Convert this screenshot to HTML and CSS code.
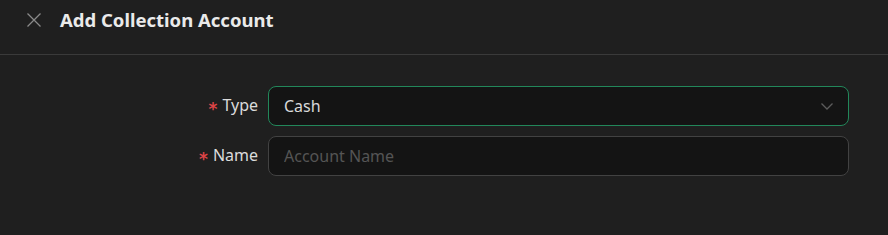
FILE: index.html
```html
<!DOCTYPE html>
<html lang="en">
<head>
    <meta charset="UTF-8">
    <meta name="viewport" content="width=device-width, initial-scale=1.0">
    <title>Add Collection Account</title>
    <link rel="stylesheet" href="styles.css">
</head>
<body>
    <div class="drawer">
        <div class="drawer-header">
            <button class="close" aria-label="Close">
                <svg width="16" height="16" viewBox="0 0 16 16" fill="none" stroke="currentColor" stroke-width="1.3">
                    <path d="M1.5 1.5 L14.5 14.5 M14.5 1.5 L1.5 14.5"/>
                </svg>
            </button>
            <div class="title">Add Collection Account</div>
        </div>

        <form class="form">
            <div class="row">
                <label class="label"><span class="req">*</span>Type</label>
                <div class="select focused">
                    <span class="value">Cash</span>
                    <svg class="arrow" width="14" height="14" viewBox="0 0 14 14" fill="none" stroke="currentColor" stroke-width="1.3">
                        <path d="M1.5 4.5 L7 10 L12.5 4.5"/>
                    </svg>
                </div>
            </div>
            <div class="row">
                <label class="label"><span class="req">*</span>Name</label>
                <input class="input" type="text" placeholder="Account Name">
            </div>
        </form>
    </div>
</body>
</html>
```

FILE: styles.css
```css
/* --- RESET & BASE -------------------------------------- */
* { box-sizing: border-box; margin: 0; padding: 0; }
html, body { height: 100%; background: #1f1f1f; font-family: "Noto Sans", "Open Sans", sans-serif; color: rgba(255,255,255,.85); }

/* --- DRAWER HEADER ------------------------------------- */
.drawer-header {
    display: flex;
    align-items: center;
    height: 55px;
    padding: 0 24px 14px 26px;
    border-bottom: 1px solid #3a3a3a;
}
.close {
    display: flex;
    width: 16px;
    height: 16px;
    margin-right: 18px;
    background: none;
    border: none;
    color: #8a8a8a;
    cursor: pointer;
}
.title {
    font-size: 18.5px;
    font-weight: 700;
    line-height: 26px;
    color: #eaeaea;
}

/* --- FORM ---------------------------------------------- */
.form {
    display: flex;
    flex-direction: column;
    gap: 10px;
    padding: 31px 39px 0 0;
}
.row {
    display: grid;
    grid-template-columns: 258px 1fr;
    column-gap: 10px;
    align-items: center;
}
.label {
    text-align: right;
    font-size: 16px;
    color: rgba(255,255,255,.85);
}
.req {
    color: #dc4446;
    margin-right: 5px;
    font-family: "DejaVu Sans", sans-serif;
    font-size: 17px;
    font-weight: 700;
    vertical-align: -4px;
}

.select, .input {
    height: 40px;
    border-radius: 8px;
    background: #141414;
    border: 1px solid #424242;
    font-family: inherit;
    font-size: 16px;
    padding: 0 15px;
    color: rgba(255,255,255,.85);
    outline: none;
}
.select {
    display: flex;
    align-items: center;
    justify-content: space-between;
}
.select.focused { border-color: #22875a; }
.arrow { color: #5c5c5c; margin-right: -1px; }
.input::placeholder { color: #555; }
```
